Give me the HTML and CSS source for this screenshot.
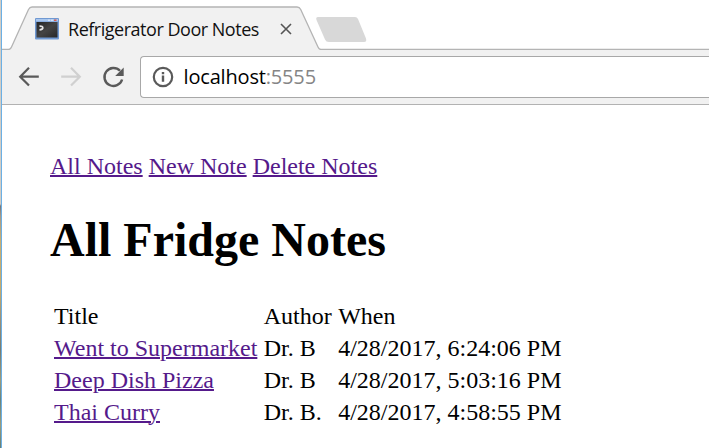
FILE: index.html
```html
<!DOCTYPE html>
<html lang="en">
<head>
<meta charset="utf-8">
<title>Refrigerator Door Notes</title>
<link rel="stylesheet" href="styles.css">
</head>
<body>
<div class="desktop"></div>
<div class="window">
  <header class="tabstrip">
    <svg class="tab-shape" width="707" height="50" viewBox="2 0 707 50">
      <path d="M2 50V49.500H8.500Q10.500 49.500 11.500 47L28.500 9.500Q29.800 7 32 7H297Q299.500 7 300.700 9.500L318 47Q319 49.500 321 49.500H709V50Z" fill="#f1f1f1"/>
      <path d="M2 49.500H8.500Q10.500 49.500 11.500 47L28.500 9.500Q29.800 7 32 7H297Q299.500 7 300.700 9.500L318 47Q319 49.500 321 49.500H709" fill="none" stroke="#b4b4b4" stroke-width="1.300"/>
      <path d="M318 17H355Q357 17 358 19L366 38.500Q367 42 364 42H329Q326 42 325 39.500L316.500 20Q315.500 17 318 17Z" fill="#d8d8d8"/>
    </svg>
    <div class="tab">
      <svg class="favicon" width="24" height="22" viewBox="0 0 24 22">
        <defs><linearGradient id="screen" x1="0" y1="0" x2="1" y2="1"><stop offset="0" stop-color="#242424"/><stop offset=".5" stop-color="#444"/><stop offset="1" stop-color="#282828"/></linearGradient></defs>
        <rect width="24" height="21.500" rx="1" fill="#7099d2"/>
        <rect x="1" y="1" width="22" height="2.500" fill="#a8c6ed"/>
        <path d="M13 2.200h2m1 0h2" stroke="#e5effa"/><path d="M19 2.200h2.500" stroke="#d65a4d" stroke-width="1.500"/>
        <rect x="1.500" y="4" width="21" height="15.500" fill="url(#screen)"/>
        <path d="M4.500 8.200Q8 8 7.800 10Q7.500 11.500 4.500 11.800" fill="none" stroke="#e6e6e6" stroke-width="1.700"/>
      </svg>
      <span class="tab-title">Refrigerator Door Notes</span>
      <svg class="close" width="12" height="12" viewBox="0 0 12 12"><path d="M1 1L11 11M11 1L1 11" stroke="#555" stroke-width="1.600"/></svg>
    </div>
  </header>
  <nav class="toolbar">
    <svg width="132" height="54" viewBox="2 50 132 54" fill="none" stroke-width="2.200">
      <path d="M38.800 76.700H20.500M29 67.800L20.200 76.700L29 85.600" stroke="#5a5a5a"/>
      <path d="M61.200 76.700H79.500M71 67.800L79.800 76.700L71 85.600" stroke="#d0d0d0"/>
      <path d="M120 70.800A9 9 0 1 0 122.100 79.500" stroke="#5a5a5a" stroke-width="2.400"/>
      <path d="M123.700 67.500V76H115.200Z" fill="#5a5a5a"/>
    </svg>
    <div class="address">
      <svg class="info" width="22" height="22" viewBox="0 0 22 22"><circle cx="11" cy="11" r="9.200" fill="none" stroke="#5a5a5a" stroke-width="2.200"/><path d="M11 6v2.200M11 9.600v6.200" stroke="#5a5a5a" stroke-width="2.400"/></svg>
      <span class="url">localhost<span class="port">:5555</span></span>
    </div>
  </nav>
  <main class="page">
    <div class="links"><a href="#">All Notes</a> <a href="#">New Note</a> <a href="#">Delete Notes</a></div>
    <h1>All Fridge Notes</h1>
    <table>
      <tr><td>Title</td><td>Author</td><td>When</td></tr>
      <tr><td><a href="#">Went to Supermarket</a></td><td>Dr. B</td><td>4/28/2017, 6:24:06 PM</td></tr>
      <tr><td><a href="#">Deep Dish Pizza</a></td><td>Dr. B</td><td>4/28/2017, 5:03:16 PM</td></tr>
      <tr><td><a href="#">Thai Curry</a></td><td>Dr. B.</td><td>4/28/2017, 4:58:55 PM</td></tr>
    </table>
  </main>
</div>
</body>
</html>
```
FILE: styles.css
```css
* { box-sizing: border-box; }
body { margin: 0; height: 448px; display: flex; overflow: hidden; background: #fff; }
.desktop {
  flex: 0 0 2px;
  border-right: 1px solid #6cb0e4;
  background: linear-gradient(#d2cdc6 0 204px, #77777a 206px, #a79a88 216px, #c9ae72 240px, #c6aa6c 290px, #99907a 320px, #777c72 350px, #9c9b7c 380px, #69837d 400px, #9b9c7c 425px, #647f78 448px);
}
.window { flex: 1; min-width: 0; }
.tabstrip { position: relative; height: 50px; }
.tab-shape { position: absolute; left: 0; top: 0; }
.tab { position: relative; display: flex; align-items: center; height: 50px; padding: 8px 0 0 33px; }
.favicon { flex: none; }
.tab-title { margin-left: 9px; width: 191px; font: 18px/24px "Open Sans", "Noto Sans", sans-serif; letter-spacing: -0.48px; white-space: nowrap; color: #111; }
.close { margin-left: 21px; }
.toolbar { display: flex; height: 55px; background: #f1f1f1; border-bottom: 1px solid #b2b2b2; }
.address {
  display: flex; align-items: center; flex: 1; height: 42px; margin: 6px 0 0 6px; padding-left: 11px;
  border: 1px solid #a8a8a8; border-right: 0; border-radius: 4px 0 0 4px; background: #fff;
}
.url { margin-left: 9.5px; padding-bottom: 1px; font: 20px/28px "Open Sans", "Noto Sans", sans-serif; letter-spacing: -0.17px; color: #000; }
.port { color: #858585; }
.page { padding: 47px 48px 0; font: 24px/28px "Liberation Serif", serif; color: #000; }
a { color: #551a8b; text-decoration: underline 2px; }
h1 { margin: 32px 0; font-size: 48px; line-height: 55px; }
table { border-spacing: 3px; }
td { padding: 0 2.4px 1px 1px; line-height: 28px; white-space: nowrap; }
```
